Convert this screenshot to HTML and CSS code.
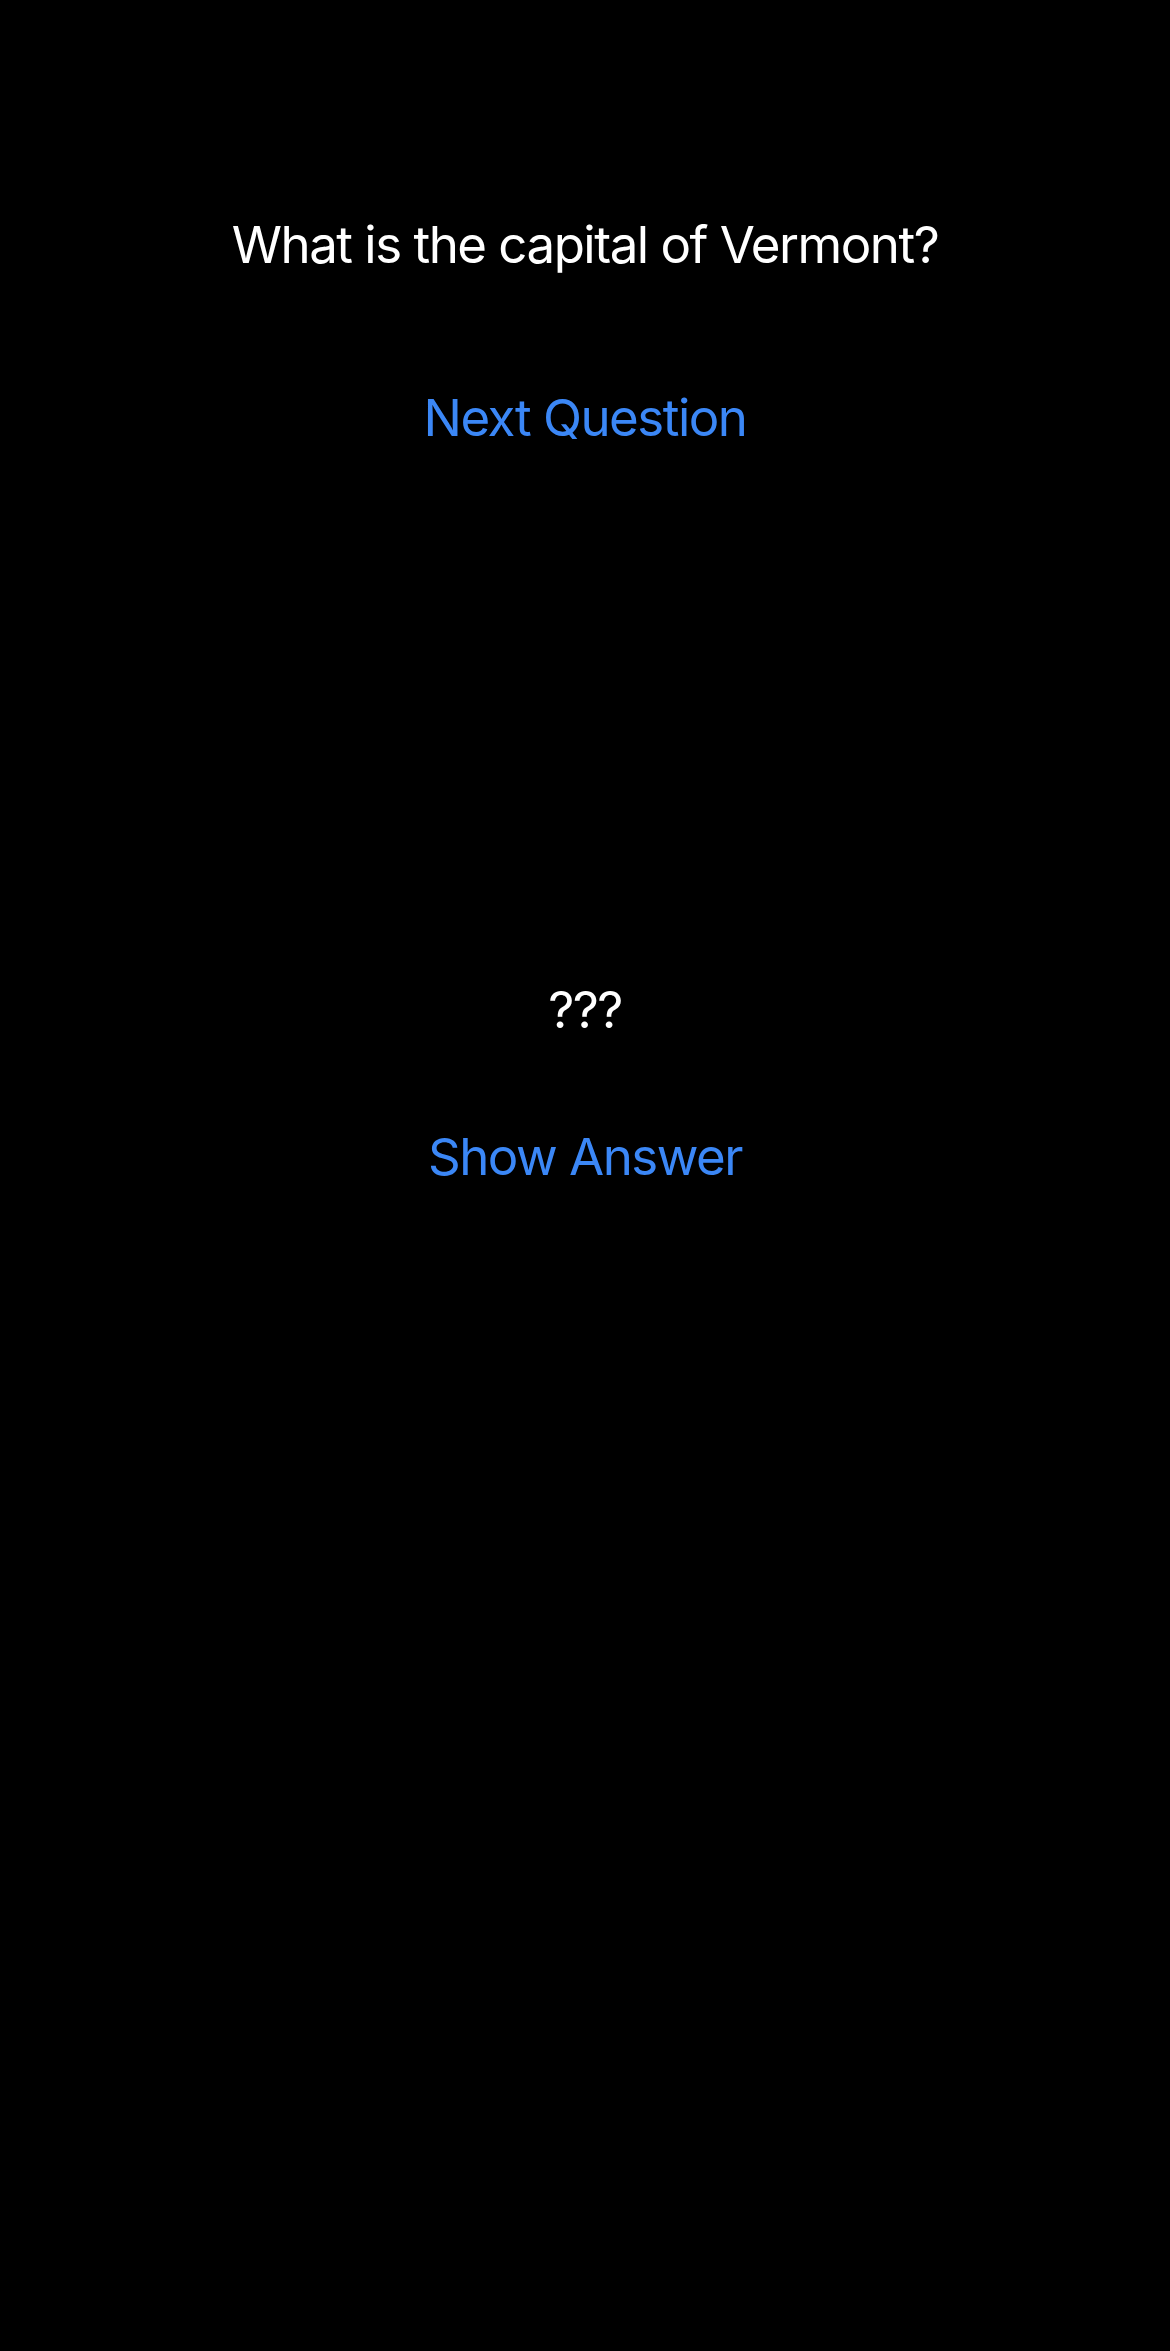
FILE: index.html
```html
<!DOCTYPE html>
<html lang="en">
<head>
<meta charset="utf-8">
<title>Quiz</title>
<link rel="stylesheet" href="styles.css">
</head>
<body>
<main class="screen">
  <section class="question-block">
    <p class="question">What is the capital of Vermont?</p>
    <button class="link-button next">Next Question</button>
  </section>
  <section class="answer-block">
    <p class="answer">???</p>
    <button class="link-button show">Show Answer</button>
  </section>
</main>
</body>
</html>
```

FILE: styles.css
```css
html, body {
  margin: 0;
  padding: 0;
  background: #000;
}

.screen {
  width: 1170px;
  height: 2351px;
  background: #000;
  display: flex;
  flex-direction: column;
  align-items: center;
  font-family: "Inter", "Roboto", "Noto Sans", sans-serif;
  font-size: 51px;
  line-height: 61px;
  letter-spacing: -1.5px;
}

.question-block,
.answer-block {
  display: flex;
  flex-direction: column;
  align-items: center;
}

.question-block {
  padding-top: 214px;
}

.question,
.answer {
  margin: 0;
  color: #fff;
}

.link-button {
  background: none;
  border: none;
  padding: 0;
  font: inherit;
  letter-spacing: inherit;
  color: #3b87f6;
  cursor: pointer;
}

.next {
  margin-top: 112px;
}

.answer-block {
  margin-top: 531px;
}

.show {
  margin-top: 86px;
}
```
